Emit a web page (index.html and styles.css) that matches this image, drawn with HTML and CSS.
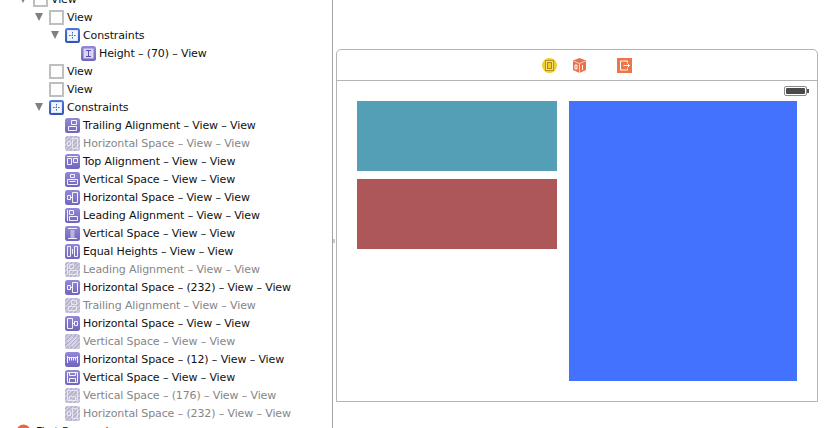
FILE: index.html
```html
<!DOCTYPE html>
<html lang="en">
<head>
    <meta charset="UTF-8">
    <meta name="viewport" content="width=device-width, initial-scale=1.0">
    <title>Storyboard</title>
    <link rel="stylesheet" href="styles.css">
</head>
<body>
    <!-- icon sheet -->
    <svg class="sheet" width="0" height="0">
        <defs>
            <linearGradient id="purple" x1="0" y1="0" x2="0" y2="1">
                <stop offset="0" stop-color="#9289d8"/>
                <stop offset="1" stop-color="#7064bd"/>
            </linearGradient>
            <linearGradient id="blue" x1="0" y1="0" x2="0" y2="1">
                <stop offset="0" stop-color="#5278dc"/>
                <stop offset="1" stop-color="#2f52b8"/>
            </linearGradient>
            <pattern id="hatch" width="3" height="3" patternUnits="userSpaceOnUse" patternTransform="rotate(45)">
                <rect width="3" height="3" fill="#b4b0cc"/>
                <rect width="1.2" height="3" fill="#d9d7e8"/>
            </pattern>
            <symbol id="i-view" viewBox="0 0 15 15">
                <rect x="1" y="1" width="13" height="13" fill="#fdfdfd" stroke="#bfbfbf" stroke-width="2"/>
            </symbol>
            <symbol id="i-group" viewBox="0 0 15 15">
                <rect width="15" height="15" rx="2.5" fill="url(#blue)"/>
                <rect x="2.500" y="2.500" width="10" height="10" fill="#f4f6fd" stroke="#dfe6f8"/>
                <path d="M7.500 4v7M4 7.500h7" stroke="#3f62c4" stroke-dasharray="1.500 1"/>
            </symbol>
            <symbol id="i-height" viewBox="0 0 15 15">
                <rect width="15" height="15" rx="2.500" fill="url(#purple)"/>
                <rect x="2.500" y="2.500" width="10" height="10" fill="#d9d5f0"/>
                <path d="M5 4.500h5M5 10.500h5M7.500 4.500v6" stroke="#5c4fae" fill="none"/>
            </symbol>
            <symbol id="i-trailing" viewBox="0 0 15 15">
                <rect width="15" height="15" rx="2.500" fill="url(#purple)"/>
                <path d="M6.500 2.500h5v4h-5zM3.500 8.500h8v4h-8z" stroke="#f3f1fc" fill="none"/>
            </symbol>
            <symbol id="i-top" viewBox="0 0 15 15">
                <rect width="15" height="15" rx="2.500" fill="url(#purple)"/>
                <path d="M2 2.500h11M2.500 4.500h4v6h-4zM8.500 4.500h4v4h-4z" stroke="#f3f1fc" fill="none"/>
            </symbol>
            <symbol id="i-vspace" viewBox="0 0 15 15">
                <rect width="15" height="15" rx="2.500" fill="url(#purple)"/>
                <path d="M5.500 2.500h4v3h-4zM2.500 7.500h10v5h-10zM4.500 9.500h6" stroke="#f3f1fc" fill="none"/>
            </symbol>
            <symbol id="i-hspace" viewBox="0 0 15 15">
                <rect width="15" height="15" rx="2.500" fill="url(#purple)"/>
                <path d="M2.500 5.500h3v4h-3zM7.500 2.500h5v10h-5zM7.500 7.500h-2" stroke="#f3f1fc" fill="none"/>
            </symbol>
            <symbol id="i-leading" viewBox="0 0 15 15">
                <rect width="15" height="15" rx="2.500" fill="url(#purple)"/>
                <path d="M2.500 2v11M4.500 2.500h4v4h-4zM4.500 8.500h8v4h-8z" stroke="#f3f1fc" fill="none"/>
            </symbol>
            <symbol id="i-vbar" viewBox="0 0 15 15">
                <rect width="15" height="15" rx="2.500" fill="url(#purple)"/>
                <path d="M3 2.500h9M3 12.500h9M5.500 5h4M5.500 7h4M5.500 9h4M5.500 11h4" stroke="#f3f1fc" fill="none"/>
            </symbol>
            <symbol id="i-equal" viewBox="0 0 15 15">
                <rect width="15" height="15" rx="2.500" fill="url(#purple)"/>
                <path d="M2.500 2.500h3v10h-3zM9.500 2.500h3v10h-3zM7.500 5v5" stroke="#f3f1fc" fill="none"/>
            </symbol>
            <symbol id="i-hright" viewBox="0 0 15 15">
                <rect width="15" height="15" rx="2.500" fill="url(#purple)"/>
                <path d="M2.500 2.500h5v10h-5zM9.500 5.500h3v4h-3zM8 7.500h1.500" stroke="#f3f1fc" fill="none"/>
            </symbol>
            <symbol id="i-ruler" viewBox="0 0 15 15">
                <rect width="15" height="15" rx="2.500" fill="url(#purple)"/>
                <path d="M2.500 4v7M12.500 4v7M2.500 5.500h10M4.500 5.500v3M6.500 5.500v3M8.500 5.500v3M10.500 5.500v3" stroke="#f3f1fc" fill="none"/>
            </symbol>
            <symbol id="i-vbox" viewBox="0 0 15 15">
                <rect width="15" height="15" rx="2.500" fill="url(#purple)"/>
                <path d="M2.500 2.500h10v10h-10zM4.500 2.500v3h6v-3M4.500 12.500v-4h6v4" stroke="#f3f1fc" fill="none"/>
            </symbol>
            <symbol id="i-off-h" viewBox="0 0 15 15">
                <rect width="15" height="15" rx="2.500" fill="url(#hatch)"/>
                <path d="M2.500 5.500h3v4h-3zM7.500 2.500h5v10h-5z" stroke="#f0eff6" fill="none" opacity=".8"/>
            </symbol>
            <symbol id="i-off-l" viewBox="0 0 15 15">
                <rect width="15" height="15" rx="2.500" fill="url(#hatch)"/>
                <path d="M2.500 2v11M4.500 2.500h4v4h-4zM4.500 8.500h8v4h-8z" stroke="#f0eff6" fill="none" opacity=".8"/>
            </symbol>
            <symbol id="i-off-t" viewBox="0 0 15 15">
                <rect width="15" height="15" rx="2.500" fill="url(#hatch)"/>
                <path d="M6.500 2.500h5v4h-5zM3.500 8.500h8v4h-8z" stroke="#f0eff6" fill="none" opacity=".8"/>
            </symbol>
            <symbol id="i-off-v" viewBox="0 0 15 15">
                <rect width="15" height="15" rx="2.500" fill="url(#hatch)"/>
                <path d="M3 12l9-9M3 8l5-5M7 12l5-5" stroke="#f0eff6" fill="none" opacity=".8"/>
            </symbol>
            <symbol id="i-off-b" viewBox="0 0 15 15">
                <rect width="15" height="15" rx="2.500" fill="url(#hatch)"/>
                <path d="M2.500 2.500h10v10h-10zM4.500 8.500h6v4h-6z" stroke="#f0eff6" fill="none" opacity=".8"/>
            </symbol>
            <symbol id="i-first" viewBox="0 0 15 15">
                <path d="M0 6.500a6.500 6 0 0 1 13 0v8.500H0z" fill="#e8673f"/>
            </symbol>
            <symbol id="i-controller" viewBox="0 0 15 15">
                <circle cx="7.500" cy="7.500" r="7.500" fill="#f2cd23"/>
                <rect x="3.500" y="2.500" width="8" height="10" fill="#f5e27e" stroke="#b8951a"/>
                <rect x="5.500" y="4.500" width="4" height="6" fill="#f2cd23" stroke="#a98a14"/>
            </symbol>
            <symbol id="i-cube" viewBox="0 0 15 15">
                <path d="M7.500 0l6.500 2.500v9.500l-6.500 3-6.500-3V2.500z" fill="#e9704a"/>
                <path d="M1.500 3l6 2.500L13.500 3M7.500 5.500V15" stroke="#f8d5c6" fill="none"/>
                <path d="M3 7h2v4H3zM10.500 7v5" stroke="#fff" fill="none"/>
            </symbol>
            <symbol id="i-exit" viewBox="0 0 15 15">
                <rect width="15" height="15" fill="#ee7548"/>
                <path d="M10.500 4.500v-1.500h-7v9h7v-1.500M6.500 7.500h6M10.500 5.500l2 2-2 2" stroke="#fff" fill="none"/>
            </symbol>
        </defs>
    </svg>

    <aside class="outline">
        <ul class="tree">
            <li class="row d1"><span class="tri"></span><svg class="ic"><use href="#i-view"/></svg>View</li>
            <li class="row d2"><span class="tri"></span><svg class="ic"><use href="#i-view"/></svg>View</li>
            <li class="row d3"><span class="tri"></span><svg class="ic"><use href="#i-group"/></svg>Constraints</li>
            <li class="row d4"><span class="gap"></span><svg class="ic"><use href="#i-height"/></svg>Height – (70) – View</li>
            <li class="row d2"><span class="gap"></span><svg class="ic"><use href="#i-view"/></svg>View</li>
            <li class="row d2"><span class="gap"></span><svg class="ic"><use href="#i-view"/></svg>View</li>
            <li class="row d2"><span class="tri"></span><svg class="ic"><use href="#i-group"/></svg>Constraints</li>
            <li class="row d3"><span class="gap"></span><svg class="ic"><use href="#i-trailing"/></svg>Trailing Alignment – View – View</li>
            <li class="row d3 off"><span class="gap"></span><svg class="ic"><use href="#i-off-h"/></svg>Horizontal Space – View – View</li>
            <li class="row d3"><span class="gap"></span><svg class="ic"><use href="#i-top"/></svg>Top Alignment – View – View</li>
            <li class="row d3"><span class="gap"></span><svg class="ic"><use href="#i-vspace"/></svg>Vertical Space – View – View</li>
            <li class="row d3"><span class="gap"></span><svg class="ic"><use href="#i-hspace"/></svg>Horizontal Space – View – View</li>
            <li class="row d3"><span class="gap"></span><svg class="ic"><use href="#i-leading"/></svg>Leading Alignment – View – View</li>
            <li class="row d3"><span class="gap"></span><svg class="ic"><use href="#i-vbar"/></svg>Vertical Space – View – View</li>
            <li class="row d3"><span class="gap"></span><svg class="ic"><use href="#i-equal"/></svg>Equal Heights – View – View</li>
            <li class="row d3 off"><span class="gap"></span><svg class="ic"><use href="#i-off-l"/></svg>Leading Alignment – View – View</li>
            <li class="row d3"><span class="gap"></span><svg class="ic"><use href="#i-hspace"/></svg>Horizontal Space – (232) – View – View</li>
            <li class="row d3 off"><span class="gap"></span><svg class="ic"><use href="#i-off-t"/></svg>Trailing Alignment – View – View</li>
            <li class="row d3"><span class="gap"></span><svg class="ic"><use href="#i-hright"/></svg>Horizontal Space – View – View</li>
            <li class="row d3 off"><span class="gap"></span><svg class="ic"><use href="#i-off-v"/></svg>Vertical Space – View – View</li>
            <li class="row d3"><span class="gap"></span><svg class="ic"><use href="#i-ruler"/></svg>Horizontal Space – (12) – View – View</li>
            <li class="row d3"><span class="gap"></span><svg class="ic"><use href="#i-vbox"/></svg>Vertical Space – View – View</li>
            <li class="row d3 off"><span class="gap"></span><svg class="ic"><use href="#i-off-b"/></svg>Vertical Space – (176) – View – View</li>
            <li class="row d3 off"><span class="gap"></span><svg class="ic"><use href="#i-off-h"/></svg>Horizontal Space – (232) – View – View</li>
            <li class="row d0"><span class="gap"></span><svg class="ic"><use href="#i-first"/></svg>First Responder</li>
        </ul>
        <span class="grip"></span>
    </aside>

    <main class="canvas">
        <section class="scene">
            <div class="dock">
                <svg class="dock-ic"><use href="#i-controller"/></svg>
                <svg class="dock-ic"><use href="#i-cube"/></svg>
                <svg class="dock-ic last"><use href="#i-exit"/></svg>
            </div>
            <div class="status">
                <span class="battery"><span class="charge"></span></span>
            </div>
            <div class="content">
                <div class="left-col">
                    <div class="panel teal"></div>
                    <div class="panel red"></div>
                </div>
                <div class="panel blue"></div>
            </div>
        </section>
    </main>
</body>
</html>
```

FILE: styles.css
```css
* {
    margin: 0;
    padding: 0;
    box-sizing: border-box;
}

html, body {
    height: 100%;
    overflow: hidden;
}

body {
    display: flex;
    background: #fff;
    font-family: 'DejaVu Sans', sans-serif;
    font-size: 11px;
    letter-spacing: -0.12px;
    color: #111;
}

.sheet {
    position: absolute;
}

.outline {
    width: 333px;
    height: 100%;
    border-right: 1px solid #a3a3a3;
    position: relative;
    flex-shrink: 0;
}

.grip {
    position: absolute;
    top: 239px;
    right: -3px;
    width: 2px;
    height: 4px;
    background: #c9c9c9;
}

.tree {
    list-style: none;
    margin-top: -10px;
}

.row {
    display: flex;
    align-items: center;
    height: 18px;
    white-space: nowrap;
}

.d0 { padding-left: 3px; }
.d1 { padding-left: 19px; }
.d2 { padding-left: 35px; }
.d3 { padding-left: 51px; }
.d4 { padding-left: 67px; }

.off {
    color: #868686;
}

.tri,
.gap {
    width: 14px;
    flex-shrink: 0;
}

.tri::before {
    content: '';
    display: block;
    width: 0;
    height: 0;
    border-left: 4.5px solid transparent;
    border-right: 4.5px solid transparent;
    border-top: 8px solid #808080;
}

.ic {
    width: 15px;
    height: 15px;
    margin-right: 3px;
    flex-shrink: 0;
}

.d0 .ic {
    margin-right: 4px;
}

.canvas {
    flex: 1;
    padding: 49px 15px 26px 3px;
}

.scene {
    height: 353px;
    display: flex;
    flex-direction: column;
    border: 1px solid #b4b4b4;
    border-radius: 5px 5px 0 0;
}

.dock {
    height: 31px;
    display: flex;
    align-items: center;
    gap: 15px;
    padding-left: 205px;
    border-bottom: 1px solid #b4b4b4;
    flex-shrink: 0;
}

.dock-ic {
    width: 15px;
    height: 15px;
}

.dock-ic.last {
    margin-left: 15px;
}

.status {
    height: 20px;
    display: flex;
    justify-content: flex-end;
    align-items: center;
    padding-right: 10px;
}

.battery {
    width: 23px;
    height: 10px;
    padding: 1px;
    border: 1px solid #8a8a8a;
    border-radius: 2px;
    position: relative;
}

.battery::after {
    content: '';
    position: absolute;
    top: 2px;
    right: -3px;
    width: 2px;
    height: 4px;
    background: #555;
}

.charge {
    display: block;
    height: 100%;
    background: #4a4a4a;
    border-radius: 1px;
}

.content {
    flex: 1;
    display: flex;
    gap: 12px;
    padding: 0 20px 20px;
}

.left-col {
    width: 200px;
    display: flex;
    flex-direction: column;
    gap: 8px;
}

.panel {
    height: 70px;
}

.teal {
    background: #559fb6;
}

.red {
    background: #ae5759;
}

.blue {
    width: 228px;
    height: 280px;
    background: #4372ff;
}
```
